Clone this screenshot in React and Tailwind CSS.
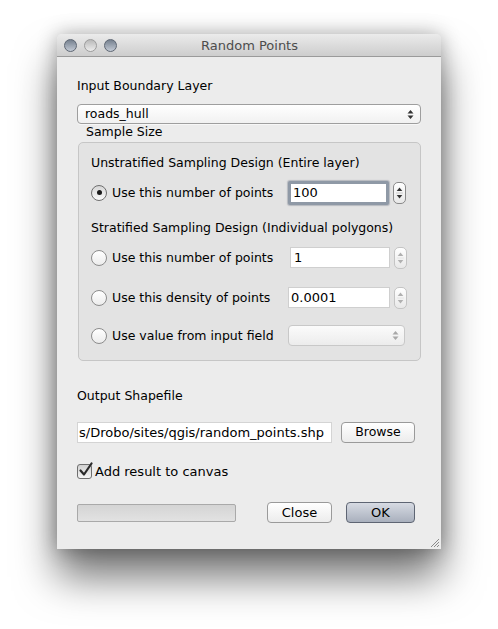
import React from "react";

const font = { fontFamily: '"DejaVu Sans", "Liberation Sans", sans-serif' };

function UpDown({ className = "" }) {
  return (
    <svg width="7" height="11" viewBox="0 0 7 11" className={className}>
      <path d="M3.5 1 L6.5 4.5 L0.5 4.5 Z" fill="currentColor" />
      <path d="M3.5 10 L6.5 6.5 L0.5 6.5 Z" fill="currentColor" />
    </svg>
  );
}

function Spinner({ dim }) {
  return (
    <div
      className={`w-[13px] h-[22px] rounded-[5px] border flex items-center justify-center bg-gradient-to-b from-[#ffffff] to-[#e8e8e8] ${
        dim ? "border-[#c4c4c4] text-[#b0b0b0]" : "border-[#8a8a8a] text-[#333]"
      }`}
    >
      <svg width="7" height="14" viewBox="0 0 7 14">
        <path d="M3.5 1.5 L6.3 5 L0.7 5 Z" fill="currentColor" />
        <path d="M3.5 12.5 L6.3 9 L0.7 9 Z" fill="currentColor" />
        <line x1="0" y1="7" x2="7" y2="7" stroke="currentColor" strokeOpacity="0.35" strokeWidth="0.6" />
      </svg>
    </div>
  );
}

function Radio({ checked }) {
  return (
    <div
      className={`w-[16px] h-[16px] rounded-full border flex items-center justify-center shrink-0 ${
        checked
          ? "border-[#6f6f6f] bg-gradient-to-b from-[#d6d6d6] to-[#fafafa]"
          : "border-[#8c8c8c] bg-gradient-to-b from-[#ffffff] to-[#ececec]"
      }`}
    >
      {checked && <div className="w-[5px] h-[5px] rounded-full bg-[#1a1a1a]" />}
    </div>
  );
}

function Light({ mid }) {
  return (
    <div
      className={`w-[13px] h-[13px] rounded-full border ${
        mid
          ? "border-[#9c9c9c] bg-gradient-to-b from-[#b9b9b9] to-[#ededed]"
          : "border-[#5d6673] bg-gradient-to-b from-[#76818f] to-[#c3cad5]"
      }`}
    />
  );
}

export default function App() {
  return (
    <div className="w-[498px] h-[629px] bg-white pt-[34px] pl-[57px]" style={font}>
      <div className="relative w-[384px] h-[515px] bg-[#ececec] rounded-t-[5px] shadow-[0_28px_42px_rgba(0,0,0,0.55),0_0_20px_rgba(0,0,0,0.3)] flex flex-col text-[12.5px] text-black">
        {/* title bar */}
        <div className="relative h-[23px] rounded-t-[5px] bg-gradient-to-b from-[#ebebeb] to-[#cdcdcd] border-b border-[#9a9a9a] flex items-center pl-[7px] gap-[7px]">
          <Light />
          <Light mid />
          <Light />
          <div className="absolute inset-0 flex items-center justify-center text-[13px] text-[#4d4d4d] pl-[1px] pt-[1px]">
            Random Points
          </div>
        </div>

        <div className="px-[20px] flex flex-col">
          <div className="mt-[20px] h-[16px] flex items-center pt-[2px]">Input Boundary Layer</div>

          <div className="mt-[11px] h-[20px] w-[344px] rounded-[4px] border border-[#9e9e9e] bg-gradient-to-b from-[#ffffff] to-[#f1f1f1] flex items-center pl-[7px] pr-[6px] shadow-[0_1px_0_rgba(255,255,255,0.6)]">
            <span className="flex-1">roads_hull</span>
            <UpDown className="text-[#333]" />
          </div>

          <div className="h-[16px] flex items-center pl-[9px] pt-[1px]">Sample Size</div>

          {/* group box */}
          <div className="mt-[2px] ml-[1px] w-[343px] h-[219px] rounded-[5px] border border-[#c6c6c6] bg-[#e3e3e3] pl-[12px] pt-[11px] flex flex-col">
            <div className="h-[16px] flex items-center pt-[3px]">Unstratified Sampling Design (Entire layer)</div>

            <div className="mt-[11px] h-[23px] flex items-center">
              <Radio checked />
              <span className="ml-[5px] w-[176px] pt-[1px]">Use this number of points</span>
              <div className="w-[101px] h-[24px] rounded-[2px] border-[3px] border-[#8f99a6] bg-white flex items-center pl-[2px] text-[13px] shadow-[0_0_1px_1px_rgba(80,90,110,0.3)]">
                100
              </div>
              <div className="ml-[4px]">
                <Spinner />
              </div>
            </div>

            <div className="mt-[15px] h-[16px] flex items-center pt-[2px]">Stratified Sampling Design (Individual polygons)</div>

            <div className="mt-[12px] h-[21px] flex items-center">
              <Radio />
              <span className="ml-[5px] w-[178px] pt-[2px]">Use this number of points</span>
              <div className="w-[100px] h-[21px] border border-[#cfcfcf] bg-white flex items-center pl-[3px] text-[13px]">1</div>
              <div className="ml-[4px]">
                <Spinner dim />
              </div>
            </div>

            <div className="mt-[19px] h-[21px] flex items-center">
              <Radio />
              <span className="ml-[5px] w-[176px] pt-[2px]">Use this density of points</span>
              <div className="w-[102px] h-[21px] border border-[#cfcfcf] bg-white flex items-center pl-[2px] text-[13px]">0.0001</div>
              <div className="ml-[4px]">
                <Spinner dim />
              </div>
            </div>

            <div className="mt-[17px] h-[21px] flex items-center">
              <Radio />
              <span className="ml-[5px] w-[176px] pt-[2px]">Use value from input field</span>
              <div className="w-[117px] h-[21px] rounded-[4px] border border-[#c8c8c8] bg-gradient-to-b from-[#fbfbfb] to-[#ececec] flex items-center justify-end pr-[5px]">
                <UpDown className="text-[#a8a8a8]" />
              </div>
            </div>
          </div>

          <div className="mt-[27px] h-[16px] flex items-center pt-[1px]">Output Shapefile</div>

          <div className="mt-[18px] h-[21px] flex items-center">
            <div className="w-[255px] h-[21px] border border-[#d4d4d4] bg-white flex items-center overflow-hidden whitespace-nowrap text-[13px] pl-[1px]">
              s/Drobo/sites/qgis/random_points.shp
            </div>
            <div className="ml-[9px] w-[74px] h-[21px] rounded-[4px] border border-[#9a9a9a] bg-gradient-to-b from-[#ffffff] to-[#ececec] flex items-center justify-center">
              Browse
            </div>
          </div>

          <div className="mt-[20px] h-[16px] flex items-center">
            <div className="w-[15px] h-[15px] rounded-[3px] border border-[#6f6f6f] bg-gradient-to-b from-[#d0d0d0] to-[#f5f5f5] relative">
              <svg width="16" height="16" viewBox="0 0 16 16" className="absolute left-[0px] top-[-3px]">
                <path d="M2.5 8.5 L6 12.5 L13.5 1.5" fill="none" stroke="#2a2a2a" strokeWidth="2.2" strokeLinecap="round" strokeLinejoin="round" />
              </svg>
            </div>
            <span className="ml-[3px] text-[13px] pt-[1px]">Add result to canvas</span>
          </div>

          <div className="mt-[23px] h-[21px] flex items-center">
            <div className="w-[159px] h-[18px] rounded-[2px] border border-[#a9a9a9] bg-gradient-to-b from-[#d4d4d4] to-[#e2e2e2]" />
            <div className="ml-[31px] w-[65px] h-[21px] rounded-[4px] border border-[#9a9a9a] bg-gradient-to-b from-[#ffffff] to-[#ececec] flex items-center justify-center text-[13px]">
              Close
            </div>
            <div className="ml-[14px] w-[69px] h-[21px] rounded-[4px] border border-[#5e6573] bg-gradient-to-b from-[#d7dbe3] to-[#a9b0bd] flex items-center justify-center text-[13px]">
              OK
            </div>
          </div>
        </div>

        {/* resize grip */}
        <svg width="12" height="12" viewBox="0 0 12 12" className="absolute right-[1px] bottom-[1px]">
          <path d="M11 3 L3 11 M11 6 L6 11 M11 9 L9 11" stroke="#8a8a8a" strokeWidth="1" />
        </svg>
      </div>
    </div>
  );
}
